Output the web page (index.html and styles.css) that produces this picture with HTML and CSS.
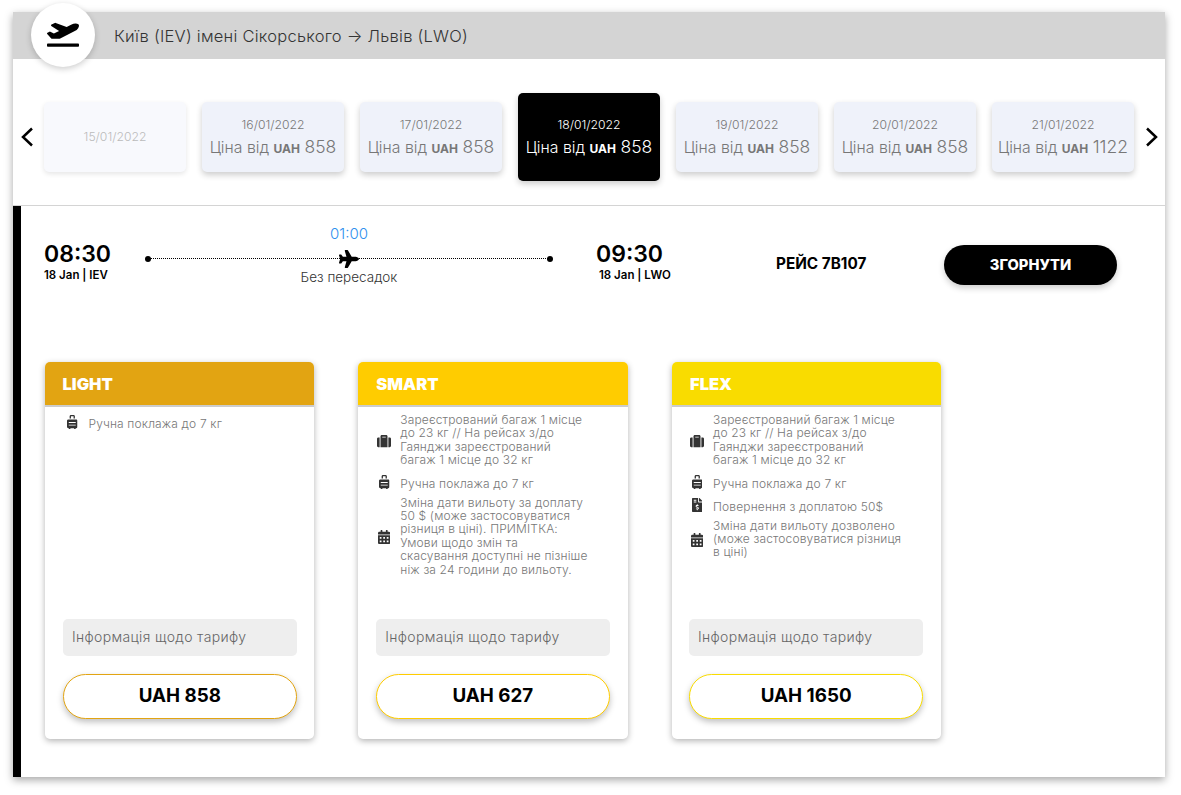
FILE: index.html
```html
<!DOCTYPE html>
<html lang="en">
<head>
    <meta charset="UTF-8">
    <meta name="viewport" content="width=device-width, initial-scale=1.0">
    <title>Вибір рейсу</title>
    <link rel="stylesheet" href="styles.css">
</head>
<body>
    <svg class="icon-defs" xmlns="http://www.w3.org/2000/svg">
        <symbol id="i-departure" viewBox="0 0 640 512"><path d="M624 448H16c-8.84 0-16 7.16-16 16v32c0 8.84 7.16 16 16 16h608c8.84 0 16-7.16 16-16v-32c0-8.84-7.16-16-16-16zM80.55 341.27c6.28 6.84 15.1 10.72 24.33 10.71l130.54-.18a65.62 65.62 0 0 0 29.64-7.12l290.96-147.65c26.74-13.57 50.71-32.94 67.02-58.31 18.31-28.48 20.3-49.09 13.07-63.65-7.21-14.57-24.74-25.27-58.25-27.45-29.85-1.94-59.54 5.92-86.28 19.48l-98.51 49.99-218.7-82.06a17.799 17.799 0 0 0-18-1.11L90.62 67.29c-10.67 5.41-13.25 19.65-5.17 28.53l156.22 98.1-103.21 52.38-72.35-36.47a17.804 17.804 0 0 0-16.07.02L9.91 230.22c-10.44 5.3-13.19 19.12-5.57 28.08l76.21 82.97z"/></symbol>
        <symbol id="i-plane" viewBox="0 0 576 512"><path d="M480 192H365.71L260.61 8.06A16.014 16.014 0 0 0 246.71 0h-65.5c-10.63 0-18.3 10.17-15.38 20.39L214.86 192H112l-43.2-57.6c-3.02-4.03-7.77-6.4-12.8-6.4H16.01C5.6 128-2.04 137.78.49 147.88L32 256 .49 364.12C-2.04 374.22 5.6 384 16.01 384H56c5.04 0 9.78-2.37 12.8-6.4L112 320h102.86l-49.03 171.6c-2.92 10.22 4.75 20.4 15.38 20.4h65.5c5.74 0 11.04-3.08 13.89-8.06L365.71 320H480c35.35 0 96-28.65 96-64s-60.65-64-96-64z"/></symbol>
        <symbol id="i-suitcase" viewBox="0 0 512 512"><path d="M128 480h256V80c0-26.5-21.5-48-48-48H176c-26.5 0-48 21.5-48 48v400zm64-384h128v32H192V96zm320 80v256c0 26.5-21.5 48-48 48h-48V128h48c26.5 0 48 21.5 48 48zM96 480H48c-26.5 0-48-21.5-48-48V176c0-26.5 21.5-48 48-48h48v352z"/></symbol>
        <symbol id="i-rolling" viewBox="0 0 384 512"><path d="M336 160H48c-26.51 0-48 21.49-48 48v224c0 26.51 21.49 48 48 48h16v16c0 8.84 7.16 16 16 16h32c8.84 0 16-7.16 16-16v-16h128v16c0 8.84 7.16 16 16 16h32c8.84 0 16-7.16 16-16v-16h16c26.51 0 48-21.49 48-48V208c0-26.51-21.49-48-48-48zm-16 216c0 4.42-3.58 8-8 8H72c-4.42 0-8-3.58-8-8v-16c0-4.42 3.58-8 8-8h240c4.42 0 8 3.58 8 8v16zm0-96c0 4.42-3.58 8-8 8H72c-4.42 0-8-3.58-8-8v-16c0-4.42 3.58-8 8-8h240c4.42 0 8 3.58 8 8v16zM144 48h96v80h48V48c0-26.51-21.49-48-48-48h-96c-26.51 0-48 21.49-48 48v80h48V48z"/></symbol>
        <symbol id="i-calendar" viewBox="0 0 448 512"><path d="M0 464c0 26.5 21.5 48 48 48h352c26.5 0 48-21.5 48-48V192H0v272zm320-196c0-6.6 5.4-12 12-12h40c6.6 0 12 5.4 12 12v40c0 6.6-5.4 12-12 12h-40c-6.6 0-12-5.4-12-12v-40zm0 128c0-6.6 5.4-12 12-12h40c6.6 0 12 5.4 12 12v40c0 6.6-5.4 12-12 12h-40c-6.6 0-12-5.4-12-12v-40zM192 268c0-6.6 5.4-12 12-12h40c6.6 0 12 5.4 12 12v40c0 6.6-5.4 12-12 12h-40c-6.6 0-12-5.4-12-12v-40zm0 128c0-6.6 5.4-12 12-12h40c6.6 0 12 5.4 12 12v40c0 6.6-5.4 12-12 12h-40c-6.6 0-12-5.4-12-12v-40zM64 268c0-6.6 5.4-12 12-12h40c6.6 0 12 5.4 12 12v40c0 6.6-5.4 12-12 12H76c-6.6 0-12-5.4-12-12v-40zm0 128c0-6.6 5.4-12 12-12h40c6.6 0 12 5.4 12 12v40c0 6.6-5.4 12-12 12H76c-6.6 0-12-5.4-12-12v-40zM400 64h-48V16c0-8.8-7.2-16-16-16h-32c-8.8 0-16 7.2-16 16v48H160V16c0-8.8-7.2-16-16-16h-32c-8.8 0-16 7.2-16 16v48H48C21.5 64 0 85.5 0 112v48h448v-48c0-26.5-21.5-48-48-48z"/></symbol>
        <symbol id="i-invoice" viewBox="0 0 384 512"><path d="M377 105L279.1 7c-4.5-4.5-10.6-7-17-7H256v128h128v-6.1c0-6.3-2.5-12.4-7-16.9zm-153 31V0H24C10.7 0 0 10.7 0 24v464c0 13.3 10.7 24 24 24h336c13.3 0 24-10.7 24-24V160H248c-13.2 0-24-10.8-24-24zM64 72c0-4.42 3.58-8 8-8h80c4.42 0 8 3.58 8 8v16c0 4.42-3.58 8-8 8H72c-4.42 0-8-3.58-8-8V72zm0 80v-16c0-4.42 3.58-8 8-8h80c4.42 0 8 3.58 8 8v16c0 4.42-3.58 8-8 8H72c-4.42 0-8-3.58-8-8zm144 263.88V440c0 4.42-3.58 8-8 8h-16c-4.42 0-8-3.58-8-8v-24.29c-11.29-.58-22.27-4.52-31.37-11.35-3.9-2.93-4.1-8.77-.57-12.14l11.75-11.21c2.77-2.64 6.89-2.76 10.13-.73 3.87 2.42 8.26 3.72 12.82 3.72h28.11c6.5 0 11.8-5.92 11.8-13.19 0-5.95-3.61-11.19-8.77-12.73l-45-13.5c-18.59-5.58-31.58-23.42-31.58-43.39 0-24.52 19.05-44.44 42.67-45.07V232c0-4.42 3.58-8 8-8h16c4.42 0 8 3.58 8 8v24.29c11.29.58 22.27 4.51 31.37 11.35 3.9 2.93 4.1 8.77.57 12.14l-11.75 11.21c-2.77 2.64-6.89 2.76-10.13.73-3.87-2.43-8.26-3.72-12.82-3.72h-28.11c-6.5 0-11.8 5.92-11.8 13.19 0 5.95 3.61 11.19 8.77 12.73l45 13.5c18.59 5.58 31.58 23.42 31.58 43.39 0 24.53-19.05 44.44-42.67 45.07z"/></symbol>
    </svg>

    <div class="panel">
        <div class="route-header">
            <div class="route-badge"><svg class="route-badge-icon"><use href="#i-departure"/></svg></div>
            <div class="route-title">Київ (IEV) імені Сікорського → Львів (LWO)</div>
        </div>

        <div class="date-strip">
            <svg class="arrow" viewBox="0 0 14 20"><path d="M12 1.5 3 10l9 8.5"/></svg>
            <div class="date-card date-card-empty"><div class="date-label">15/01/2022</div></div>
            <div class="date-card">
                <div class="date-label">16/01/2022</div>
                <div class="date-price">Ціна від <b>UAH</b> <span class="amount">858</span></div>
            </div>
            <div class="date-card">
                <div class="date-label">17/01/2022</div>
                <div class="date-price">Ціна від <b>UAH</b> <span class="amount">858</span></div>
            </div>
            <div class="date-card date-card-active">
                <div class="date-label">18/01/2022</div>
                <div class="date-price">Ціна від <b>UAH</b> <span class="amount">858</span></div>
            </div>
            <div class="date-card">
                <div class="date-label">19/01/2022</div>
                <div class="date-price">Ціна від <b>UAH</b> <span class="amount">858</span></div>
            </div>
            <div class="date-card">
                <div class="date-label">20/01/2022</div>
                <div class="date-price">Ціна від <b>UAH</b> <span class="amount">858</span></div>
            </div>
            <div class="date-card">
                <div class="date-label">21/01/2022</div>
                <div class="date-price">Ціна від <b>UAH</b> <span class="amount">1122</span></div>
            </div>
            <svg class="arrow" viewBox="0 0 14 20"><path d="M2 1.5 11 10l-9 8.5"/></svg>
        </div>

        <div class="flight">
            <div class="flight-row">
                <div class="flight-point">
                    <div class="flight-time">08:30</div>
                    <div class="flight-date">18 Jan | IEV</div>
                </div>
                <div class="flight-route">
                    <div class="flight-duration">01:00</div>
                    <div class="flight-line">
                        <svg class="flight-plane"><use href="#i-plane"/></svg>
                    </div>
                    <div class="flight-stops">Без пересадок</div>
                </div>
                <div class="flight-point flight-point-arrival">
                    <div class="flight-time">09:30</div>
                    <div class="flight-date">18 Jan | LWO</div>
                </div>
                <div class="flight-number">РЕЙС 7B107</div>
                <button class="collapse-btn">ЗГОРНУТИ</button>
            </div>

            <div class="fares">
                <div class="fare fare-light">
                    <div class="fare-title">LIGHT</div>
                    <div class="fare-features">
                        <div class="feature">
                            <span class="feature-icon"><svg class="ic-rolling"><use href="#i-rolling"/></svg></span>
                            <span>Ручна поклажа до 7 кг</span>
                        </div>
                    </div>
                    <div class="fare-info">Інформація щодо тарифу</div>
                    <button class="fare-price">UAH 858</button>
                </div>

                <div class="fare fare-smart">
                    <div class="fare-title">SMART</div>
                    <div class="fare-features">
                        <div class="feature feature-long">
                            <span class="feature-icon"><svg class="ic-suitcase"><use href="#i-suitcase"/></svg></span>
                            <span>Зареєстрований багаж 1 місце<br>до 23 кг // На рейсах з/до<br>Гаянджи зареєстрований<br>багаж 1 місце до 32 кг</span>
                        </div>
                        <div class="feature">
                            <span class="feature-icon"><svg class="ic-rolling"><use href="#i-rolling"/></svg></span>
                            <span>Ручна поклажа до 7 кг</span>
                        </div>
                        <div class="feature feature-long">
                            <span class="feature-icon"><svg class="ic-calendar"><use href="#i-calendar"/></svg></span>
                            <span>Зміна дати вильоту за доплату<br>50 $ (може застосовуватися<br>різниця в ціні). ПРИМІТКА:<br>Умови щодо змін та<br>скасування доступні не пізніше<br>ніж за 24 години до вильоту.</span>
                        </div>
                    </div>
                    <div class="fare-info">Інформація щодо тарифу</div>
                    <button class="fare-price">UAH 627</button>
                </div>

                <div class="fare fare-flex">
                    <div class="fare-title">FLEX</div>
                    <div class="fare-features">
                        <div class="feature feature-long">
                            <span class="feature-icon"><svg class="ic-suitcase"><use href="#i-suitcase"/></svg></span>
                            <span>Зареєстрований багаж 1 місце<br>до 23 кг // На рейсах з/до<br>Гаянджи зареєстрований<br>багаж 1 місце до 32 кг</span>
                        </div>
                        <div class="feature">
                            <span class="feature-icon"><svg class="ic-rolling"><use href="#i-rolling"/></svg></span>
                            <span>Ручна поклажа до 7 кг</span>
                        </div>
                        <div class="feature">
                            <span class="feature-icon"><svg class="ic-rolling"><use href="#i-invoice"/></svg></span>
                            <span>Повернення з доплатою 50$</span>
                        </div>
                        <div class="feature feature-long">
                            <span class="feature-icon"><svg class="ic-calendar"><use href="#i-calendar"/></svg></span>
                            <span>Зміна дати вильоту дозволено<br>(може застосовуватися різниця<br>в ціні)</span>
                        </div>
                    </div>
                    <div class="fare-info">Інформація щодо тарифу</div>
                    <button class="fare-price">UAH 1650</button>
                </div>
            </div>
        </div>
    </div>
</body>
</html>
```

FILE: styles.css
```css
* {
    box-sizing: border-box;
}
body {
    margin: 0;
    padding: 12px 16px 18px 13px;
    background-color: #fff;
    font-family: 'Inter', 'Noto Sans', sans-serif;
    color: #333;
}
.icon-defs {
    display: none;
}
.panel {
    height: 765px;
    background-color: #fff;
    box-shadow: 0 3px 8px rgba(0, 0, 0, 0.35);
    display: flex;
    flex-direction: column;
}

/* header */
.route-header {
    height: 47px;
    flex: none;
    background-color: #d4d4d4;
    display: flex;
    align-items: center;
    padding-left: 18px;
}
.route-badge {
    width: 64px;
    height: 64px;
    margin-top: -1px;
    margin-right: 19px;
    border-radius: 50%;
    background-color: #fff;
    box-shadow: 0 2px 6px rgba(0, 0, 0, 0.2);
    display: flex;
    align-items: center;
    justify-content: center;
}
.route-badge-icon {
    width: 32px;
    height: 26px;
    margin-top: -2px;
    fill: #000;
}
.route-title {
    font-size: 16.5px;
    letter-spacing: 0.25px;
    font-weight: 300;
    color: #333;
}

/* date strip */
.date-strip {
    height: 147px;
    flex: none;
    display: flex;
    align-items: center;
    gap: 16px;
    padding-left: 7px;
    border-bottom: 1px solid #d4d4d4;
}
.arrow {
    width: 14px;
    height: 20px;
    flex: none;
    margin-top: 9px;
    fill: none;
    stroke: #000;
    stroke-width: 2.5;
}
.arrow:first-child {
    margin-right: -6px;
}
.arrow:last-child {
    margin-left: -5px;
}
.date-card {
    width: 142px;
    height: 70px;
    margin-top: 9px;
    padding-top: 4px;
    flex: none;
    border-radius: 5px;
    background-color: #eff2fa;
    box-shadow: 0 3px 6px rgba(0, 0, 0, 0.2);
    color: #777;
    display: flex;
    flex-direction: column;
    align-items: center;
    justify-content: center;
    font-weight: 300;
}
.date-card-empty {
    padding-top: 0;
    background-color: #f8f9fd;
    color: #bbb;
    box-shadow: 0 2px 5px rgba(0, 0, 0, 0.1);
}
.date-card-active {
    height: 88px;
    background-color: #000;
    color: #fff;
}
.date-label {
    font-size: 12.2px;
    line-height: 18px;
}
.date-price {
    font-size: 15.8px;
    line-height: 26px;
    white-space: nowrap;
}
.date-price b {
    font-size: 12px;
    font-weight: 700;
}
.amount {
    font-size: 17.5px;
}

/* flight row */
.flight {
    flex: 1;
    border-left: 8px solid #000;
    padding-left: 23px;
}
.flight-row {
    display: flex;
    align-items: flex-start;
    height: 156px;
}
.flight-point {
    width: 104px;
    padding-top: 34px;
    color: #000;
}
.flight-time {
    font-size: 23px;
    line-height: 28px;
    font-weight: 600;
}
.flight-date {
    margin-top: 1px;
    font-size: 11.5px;
    line-height: 13px;
    font-weight: 600;
}
.flight-route {
    width: 402px;
    padding-top: 19px;
    display: flex;
    flex-direction: column;
    align-items: center;
}
.flight-duration {
    font-size: 15px;
    line-height: 18px;
    font-weight: 300;
    color: #2e8fee;
}
.flight-line {
    position: relative;
    width: 100%;
    height: 0;
    margin-top: 15px;
    border-top: 1px dotted #000;
}
.flight-line::before,
.flight-line::after {
    content: "";
    position: absolute;
    top: -3.5px;
    width: 6px;
    height: 6px;
    border-radius: 50%;
    background-color: #000;
}
.flight-line::before {
    left: -3px;
}
.flight-line::after {
    right: -3px;
}
.flight-plane {
    position: absolute;
    left: 191px;
    top: -9px;
    width: 20px;
    height: 18px;
    fill: #000;
}
.flight-stops {
    margin-top: 10px;
    font-size: 13.5px;
    line-height: 16px;
    font-weight: 300;
    color: #333;
}
.flight-point-arrival {
    width: 180px;
    margin-left: 46px;
}
.flight-point-arrival .flight-date {
    padding-left: 3px;
}
.flight-number {
    width: 168px;
    padding-top: 49px;
    font-size: 15.3px;
    line-height: 17px;
    font-weight: 700;
    color: #000;
}
.collapse-btn {
    width: 173px;
    height: 40px;
    margin-top: 39px;
    border: none;
    border-radius: 20px;
    background-color: #000;
    color: #fff;
    font-family: inherit;
    font-size: 14.7px;
    font-weight: 800;
    box-shadow: 0 3px 6px rgba(0, 0, 0, 0.2);
}

/* fare cards */
.fares {
    display: flex;
    gap: 44.5px;
    padding-left: 0.5px;
}
.fare {
    width: 269.25px;
    height: 377px;
    border-radius: 5px;
    background-color: #fff;
    box-shadow: 0 2px 6px rgba(0, 0, 0, 0.3);
    display: flex;
    flex-direction: column;
    overflow: hidden;
}
.fare-title {
    height: 45px;
    flex: none;
    padding: 12px 0 0 18px;
    font-size: 16.5px;
    line-height: 20px;
    font-weight: 900;
    color: #fff;
    border-bottom: 2px solid #ccc;
}
.fare-light .fare-title {
    background-color: #e2a412;
}
.fare-smart .fare-title {
    background-color: #ffcc00;
}
.fare-flex .fare-title {
    background-color: #f9dc00;
}
.fare-features {
    height: 212px;
    flex: none;
    padding: 5px 0 0 19px;
    font-size: 12px;
    line-height: 13.4px;
    letter-spacing: 0.15px;
    font-weight: 300;
    color: #777;
}
.fare-light .fare-features {
    padding-left: 21px;
}
.fare-flex .fare-features {
    padding-left: 18px;
}
.feature {
    display: flex;
    align-items: center;
    min-height: 23px;
}
.feature-long {
    margin-bottom: 5px;
}
.feature-long:first-child {
    margin-top: 1px;
    margin-bottom: 6px;
}
.feature-icon {
    width: 14px;
    flex: none;
    margin-right: 9px;
    margin-bottom: 4px;
    display: flex;
    justify-content: center;
}
.feature-long .feature-icon {
    margin-top: 2px;
    margin-bottom: 0;
}
.feature-icon svg {
    height: 14px;
    fill: #333;
}
.ic-rolling {
    width: 10.5px;
}
.ic-suitcase {
    width: 14px;
}
.ic-calendar {
    width: 12.25px;
}
.fare-info {
    height: 37px;
    margin: 0 17px 0 18.5px;
    padding-left: 9px;
    border-radius: 5px;
    background-color: #eee;
    font-size: 14px;
    letter-spacing: 0.35px;
    line-height: 35px;
    font-weight: 300;
    color: #666;
}
.fare-price {
    height: 45px;
    margin: 18px 17px 0 18.5px;
    padding-bottom: 4px;
    border-radius: 23px;
    background-color: #fff;
    font-family: inherit;
    font-size: 18.8px;
    font-weight: 700;
    color: #000;
    box-shadow: 0 3px 6px rgba(0, 0, 0, 0.25);
}
.fare-smart .fare-info,
.fare-smart .fare-price {
    margin-left: 18px;
    margin-right: 18px;
}
.fare-flex .fare-info,
.fare-flex .fare-price {
    margin-left: 17px;
    margin-right: 18px;
}
.fare-light .fare-price {
    border: 1px solid #e2a412;
}
.fare-smart .fare-price {
    border: 1px solid #ffcc00;
}
.fare-flex .fare-price {
    border: 1px solid #f9dc00;
}
```
